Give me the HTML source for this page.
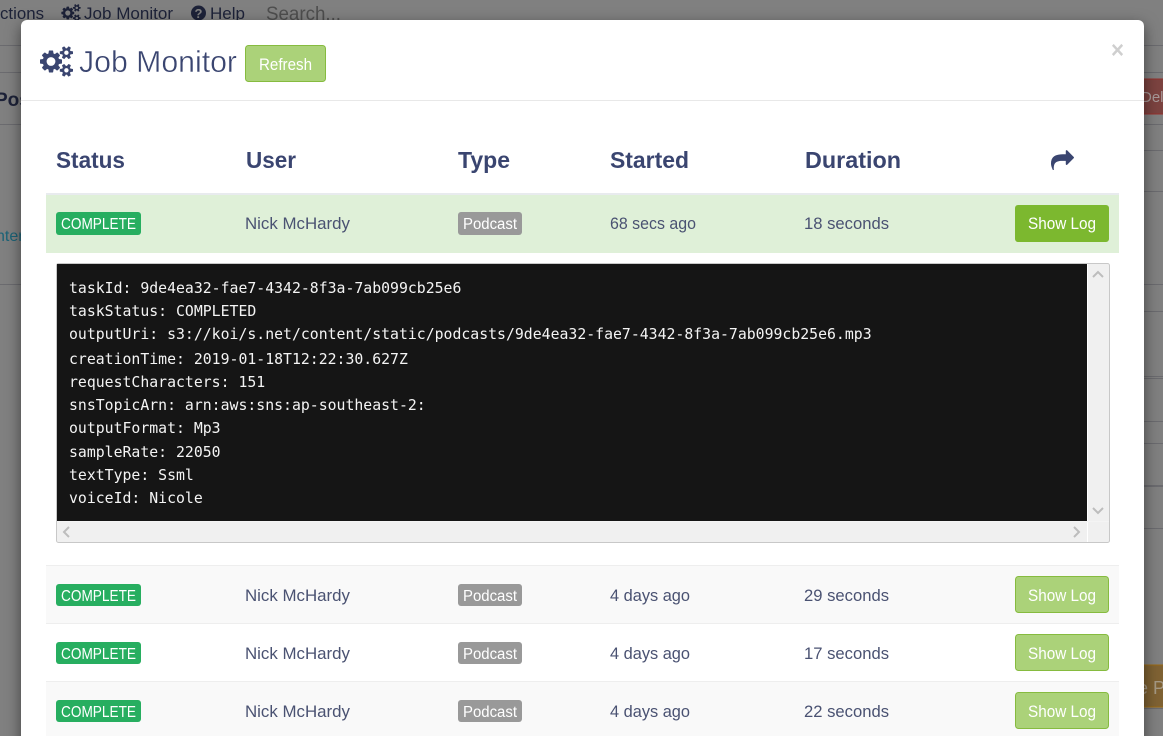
<!DOCTYPE html>
<html lang="en"><head><meta charset="utf-8"><title>Job Monitor</title>
<style>
html,body{margin:0;padding:0;width:1163px;height:736px;overflow:hidden;background:#808080}
#wrap{position:absolute;left:0;top:0;width:1163px;height:736px;overflow:hidden;background:#808080}
#bg,#fg{position:absolute;left:0;top:0;width:1163px;height:736px;display:block}
#modal{position:absolute;left:21px;top:20px;width:1123px;height:740px;background:#fff;border-radius:6px;box-shadow:0 5px 15px rgba(0,0,0,.5)}
text{font-family:"Liberation Sans",sans-serif}
.mono{font-family:"DejaVu Sans Mono",monospace;font-size:14.82px;fill:#f4f4f4}
.th{font-size:23.500px;font-weight:bold;fill:#3a4570}
.td{font-size:17px;fill:#4a5272}
.w{font-size:15.500px;fill:#fff}
.sl{font-size:16.500px;fill:#fff}
.nav{font-size:17px;fill:#1d2238}
</style></head><body>
<div id="wrap">
<svg id="bg" viewBox="0 0 1163 736" xmlns="http://www.w3.org/2000/svg">
<g fill="#6b6b6f">
<rect x="0" y="45" width="1163" height="1"/><rect x="0" y="72" width="1163" height="1"/>
<rect x="0" y="124" width="1163" height="1"/><rect x="1144" y="150" width="19" height="1"/>
<rect x="1144" y="191" width="19" height="1"/><rect x="0" y="284" width="1163" height="1"/>
<rect x="1144" y="311" width="19" height="1"/><rect x="1144" y="376" width="19" height="1"/>
<rect x="1144" y="378" width="19" height="1"/><rect x="1144" y="421" width="19" height="1"/>
<rect x="1144" y="443" width="19" height="1"/><rect x="1144" y="485" width="19" height="2"/>
<rect x="1144" y="528" width="19" height="1"/><rect x="1144" y="708" width="19" height="1"/>
</g>
<text class="nav" x="0" y="19" textLength="44" lengthAdjust="spacingAndGlyphs">ctions</text>
<svg x="61" y="4" width="20" height="18" viewBox="0 0 1920 1792"><path fill="#1d2238" d="M896 896q0-106-75-181t-181-75-181 75-75 181 75 181 181 75 181-75 75-181zm768 512q0-52-38-90t-90-38-90 38-38 90q0 53 37.5 90.5t90.5 37.5 90.5-37.5 37.5-90.5zm0-1024q0-52-38-90t-90-38-90 38-38 90q0 53 37.5 90.5t90.5 37.5 90.5-37.5 37.5-90.5zm-384 421v185q0 10-7 19.5t-16 10.5l-155 24q-11 35-32 76 34 48 90 115 7 11 7 20 0 12-7 19-23 30-82.5 89.5t-78.5 59.5q-11 0-21-7l-115-90q-37 19-77 31-11 108-23 155-7 24-30 24h-186q-11 0-20-7.5t-10-17.5l-23-153q-34-10-75-31l-118 89q-7 7-20 7-11 0-21-8-144-133-144-160 0-9 7-19 10-14 41-53t47-61q-23-44-35-82l-152-24q-10-1-17-9.5t-7-19.5v-185q0-10 7-19.5t16-10.5l155-24q11-35 32-76-34-48-90-115-7-11-7-20 0-12 7-20 22-30 82-89t79-59q11 0 21 7l115 90q34-18 77-32 11-108 23-154 7-24 30-24h186q11 0 20 7.5t10 17.5l23 153q34 10 75 31l118-89q8-7 20-7 11 0 21 8 144 133 144 160 0 8-7 19-12 16-42 54t-45 60q23 48 34 82l152 23q10 2 17 10.5t7 19.5zm640 533v140q0 16-149 31-12 27-30 52 51 113 51 138 0 4-4 7-122 71-124 71-8 0-46-47t-52-68q-20 2-30 2t-30-2q-14 21-52 68t-46 47q-2 0-124-71-4-3-4-7 0-25 51-138-18-25-30-52-149-15-149-31v-140q0-16 149-31 13-29 30-52-51-113-51-138 0-4 4-7 4-2 35-20t59-34 30-16q8 0 46 46.5t52 67.5q20-2 30-2t30 2q51-71 92-112l6-2q4 0 124 70 4 3 4 7 0 25-51 138 17 23 30 52 149 15 149 31zm0-1024v140q0 16-149 31-12 27-30 52 51 113 51 138 0 4-4 7-122 71-124 71-8 0-46-47t-52-68q-20 2-30 2t-30-2q-14 21-52 68t-46 47q-2 0-124-71-4-3-4-7 0-25 51-138-18-25-30-52-149-15-149-31v-140q0-16 149-31 13-29 30-52-51-113-51-138 0-4 4-7 4-2 35-20t59-34 30-16q8 0 46 46.5t52 67.5q20-2 30-2t30 2q51-71 92-112l6-2q4 0 124 70 4 3 4 7 0 25-51 138 17 23 30 52 149 15 149 31z"/></svg>
<text class="nav" x="84" y="19" textLength="89" lengthAdjust="spacingAndGlyphs">Job Monitor</text>
<circle cx="198.500" cy="13" r="7.500" fill="#1d2238"/>
<text x="198.500" y="18" text-anchor="middle" font-size="13" font-weight="bold" fill="#808080">?</text>
<text class="nav" x="210" y="19" textLength="35" lengthAdjust="spacingAndGlyphs">Help</text>
<text x="266" y="20" font-size="19" fill="#4e4e4e" textLength="75" lengthAdjust="spacingAndGlyphs">Search...</text>
<text x="-5" y="106" font-size="19" font-weight="bold" fill="#1d2238">Pos</text>
<text x="-4" y="241" font-size="16" fill="#1b6377">nter</text>
<rect x="1130" y="79" width="40" height="35" fill="#7c4340" stroke="#96302c"/>
<text x="1141" y="102" font-size="15" fill="#a89a99">Dele</text>
<rect x="1130" y="665" width="40" height="42" fill="#7f6233" stroke="#9c6a12"/>
<text x="1138" y="694" font-size="18" fill="#a69a85">e P</text>
</svg>
<div id="modal"></div>
<svg id="fg" viewBox="0 0 1163 736" xmlns="http://www.w3.org/2000/svg">
<rect x="21" y="100" width="1123" height="1" fill="#e8e8e8"/>
<svg x="40" y="46" width="33" height="31" viewBox="0 0 1920 1792"><path fill="#3a4570" d="M896 896q0-106-75-181t-181-75-181 75-75 181 75 181 181 75 181-75 75-181zm768 512q0-52-38-90t-90-38-90 38-38 90q0 53 37.5 90.5t90.5 37.5 90.5-37.5 37.5-90.5zm0-1024q0-52-38-90t-90-38-90 38-38 90q0 53 37.5 90.5t90.5 37.5 90.5-37.5 37.5-90.5zm-384 421v185q0 10-7 19.5t-16 10.5l-155 24q-11 35-32 76 34 48 90 115 7 11 7 20 0 12-7 19-23 30-82.5 89.5t-78.5 59.5q-11 0-21-7l-115-90q-37 19-77 31-11 108-23 155-7 24-30 24h-186q-11 0-20-7.5t-10-17.5l-23-153q-34-10-75-31l-118 89q-7 7-20 7-11 0-21-8-144-133-144-160 0-9 7-19 10-14 41-53t47-61q-23-44-35-82l-152-24q-10-1-17-9.5t-7-19.5v-185q0-10 7-19.5t16-10.5l155-24q11-35 32-76-34-48-90-115-7-11-7-20 0-12 7-20 22-30 82-89t79-59q11 0 21 7l115 90q34-18 77-32 11-108 23-154 7-24 30-24h186q11 0 20 7.5t10 17.5l23 153q34 10 75 31l118-89q8-7 20-7 11 0 21 8 144 133 144 160 0 8-7 19-12 16-42 54t-45 60q23 48 34 82l152 23q10 2 17 10.5t7 19.5zm640 533v140q0 16-149 31-12 27-30 52 51 113 51 138 0 4-4 7-122 71-124 71-8 0-46-47t-52-68q-20 2-30 2t-30-2q-14 21-52 68t-46 47q-2 0-124-71-4-3-4-7 0-25 51-138-18-25-30-52-149-15-149-31v-140q0-16 149-31 13-29 30-52-51-113-51-138 0-4 4-7 4-2 35-20t59-34 30-16q8 0 46 46.5t52 67.5q20-2 30-2t30 2q51-71 92-112l6-2q4 0 124 70 4 3 4 7 0 25-51 138 17 23 30 52 149 15 149 31zm0-1024v140q0 16-149 31-12 27-30 52 51 113 51 138 0 4-4 7-122 71-124 71-8 0-46-47t-52-68q-20 2-30 2t-30-2q-14 21-52 68t-46 47q-2 0-124-71-4-3-4-7 0-25 51-138-18-25-30-52-149-15-149-31v-140q0-16 149-31 13-29 30-52-51-113-51-138 0-4 4-7 4-2 35-20t59-34 30-16q8 0 46 46.5t52 67.5q20-2 30-2t30 2q51-71 92-112l6-2q4 0 124 70 4 3 4 7 0 25-51 138 17 23 30 52 149 15 149 31z"/></svg>
<text x="79" y="72" font-size="31" fill="#3a4570" stroke="#fff" stroke-width=".45" textLength="158" lengthAdjust="spacingAndGlyphs">Job Monitor</text>
<rect x="245.500" y="45.500" width="80" height="36" rx="3" fill="#abd279" stroke="#86bb3f"/>
<text class="sl" x="259" y="70" textLength="53" lengthAdjust="spacingAndGlyphs">Refresh</text>
<text x="1111" y="58" font-size="24" font-weight="bold" fill="#cfcfcf" textLength="13" lengthAdjust="spacingAndGlyphs">×</text>
<text class="th" x="56" y="168" textLength="69" lengthAdjust="spacingAndGlyphs">Status</text>
<text class="th" x="246" y="168" textLength="50" lengthAdjust="spacingAndGlyphs">User</text>
<text class="th" x="458" y="168" textLength="52" lengthAdjust="spacingAndGlyphs">Type</text>
<text class="th" x="610" y="168" textLength="79" lengthAdjust="spacingAndGlyphs">Started</text>
<text class="th" x="805" y="168" textLength="96" lengthAdjust="spacingAndGlyphs">Duration</text>
<svg x="1051" y="149" width="23" height="21" viewBox="0 -1216 1792 1456"><path fill="#3a4570" transform="scale(1,-1)" d="M1792 640q0 26-19 45l-512 512q-19 19-45 19t-45-19-19-45v-256h-224q-713 0-875-403-53-134-53-333 0-166 127-451 3-7 10.500-24t13.500-30 13-22q12-17 28-17 15 0 23.500 10t8.500 25q0 9-2.500 26.500t-2.500 23.500q-5 68-5 123 0 101 17.500 181t48.500 138.500 80 101 105.500 69.500 133 42.500 154 21.500 175.500 6h224v-256q0-26 19-45t45-19 45 19l512 512q19 19 19 45z"/></svg>

<rect x="46" y="193" width="1073" height="60" fill="#dff0d8"/>
<rect x="46" y="193" width="1073" height="2" fill="#e8ebee"/>
<rect x="56" y="212" width="85" height="23" rx="3" fill="#27ae60"/>
<text class="w" x="61" y="229" textLength="75" lengthAdjust="spacingAndGlyphs">COMPLETE</text>
<text class="td" x="245" y="229" textLength="105" lengthAdjust="spacingAndGlyphs">Nick McHardy</text>
<rect x="458" y="212" width="64" height="23" rx="3" fill="#999"/>
<text class="w" x="463" y="229" textLength="54" lengthAdjust="spacingAndGlyphs">Podcast</text>
<text class="td" x="610" y="229" textLength="86" lengthAdjust="spacingAndGlyphs">68 secs ago</text>
<text class="td" x="804" y="229" textLength="85" lengthAdjust="spacingAndGlyphs">18 seconds</text>
<rect x="1015" y="205" width="94" height="37" rx="3" fill="#7cb82f"/>
<text class="sl" x="1028" y="229" textLength="68" lengthAdjust="spacingAndGlyphs">Show Log</text>

<rect x="56.500" y="263.500" width="1053" height="279" rx="2" fill="#f0f0f0" stroke="#c8c8c8"/>
<rect x="57" y="264" width="1030" height="257" fill="#151515"/>
<rect x="1087" y="264" width="1" height="278" fill="#fff"/>
<rect x="57" y="521" width="1052" height="1" fill="#f4f4f4"/>
<g fill="none" stroke="#bdbdbd" stroke-width="2">
<path d="M1093 277l5-5 5 5"/><path d="M1093 508l5 5 5-5"/>
<path d="M69 527l-5 5 5 5"/><path d="M1074 527l5 5-5 5"/>
</g>
<text class="mono" x="69" y="293">taskId: 9de4ea32-fae7-4342-8f3a-7ab099cb25e6</text>
<text class="mono" x="69" y="316">taskStatus: COMPLETED</text>
<text class="mono" x="69" y="339">outputUri: s3://koi/s.net/content/static/podcasts/9de4ea32-fae7-4342-8f3a-7ab099cb25e6.mp3</text>
<text class="mono" x="69" y="364">creationTime: 2019-01-18T12:22:30.627Z</text>
<text class="mono" x="69" y="387">requestCharacters: 151</text>
<text class="mono" x="69" y="410">snsTopicArn: arn:aws:sns:ap-southeast-2:</text>
<text class="mono" x="69" y="433">outputFormat: Mp3</text>
<text class="mono" x="69" y="457">sampleRate: 22050</text>
<text class="mono" x="69" y="480">textType: Ssml</text>
<text class="mono" x="69" y="503">voiceId: Nicole</text>

<rect x="46" y="565" width="1073" height="58" fill="#f9f9f9"/>
<rect x="46" y="682" width="1073" height="54" fill="#f9f9f9"/>
<rect x="46" y="565" width="1073" height="1" fill="#eee"/>
<rect x="46" y="623" width="1073" height="1" fill="#eee"/>
<rect x="46" y="681" width="1073" height="1" fill="#eee"/>

<g>
<rect x="56" y="584" width="85" height="22" rx="3" fill="#27ae60"/>
<text class="w" x="61" y="601" textLength="75" lengthAdjust="spacingAndGlyphs">COMPLETE</text>
<text class="td" x="245" y="601" textLength="105" lengthAdjust="spacingAndGlyphs">Nick McHardy</text>
<rect x="458" y="584" width="64" height="22" rx="3" fill="#999"/>
<text class="w" x="463" y="601" textLength="54" lengthAdjust="spacingAndGlyphs">Podcast</text>
<text class="td" x="610" y="601" textLength="80" lengthAdjust="spacingAndGlyphs">4 days ago</text>
<text class="td" x="804" y="601" textLength="85" lengthAdjust="spacingAndGlyphs">29 seconds</text>
<rect x="1015.500" y="576.500" width="93" height="36" rx="3" fill="#abd279" stroke="#86bb3f"/>
<text class="sl" x="1028" y="601" textLength="68" lengthAdjust="spacingAndGlyphs">Show Log</text>
</g>
<g>
<rect x="56" y="642" width="85" height="22" rx="3" fill="#27ae60"/>
<text class="w" x="61" y="659" textLength="75" lengthAdjust="spacingAndGlyphs">COMPLETE</text>
<text class="td" x="245" y="659" textLength="105" lengthAdjust="spacingAndGlyphs">Nick McHardy</text>
<rect x="458" y="642" width="64" height="22" rx="3" fill="#999"/>
<text class="w" x="463" y="659" textLength="54" lengthAdjust="spacingAndGlyphs">Podcast</text>
<text class="td" x="610" y="659" textLength="80" lengthAdjust="spacingAndGlyphs">4 days ago</text>
<text class="td" x="804" y="659" textLength="85" lengthAdjust="spacingAndGlyphs">17 seconds</text>
<rect x="1015.500" y="634.500" width="93" height="36" rx="3" fill="#abd279" stroke="#86bb3f"/>
<text class="sl" x="1028" y="659" textLength="68" lengthAdjust="spacingAndGlyphs">Show Log</text>
</g>
<g>
<rect x="56" y="700" width="85" height="22" rx="3" fill="#27ae60"/>
<text class="w" x="61" y="717" textLength="75" lengthAdjust="spacingAndGlyphs">COMPLETE</text>
<text class="td" x="245" y="717" textLength="105" lengthAdjust="spacingAndGlyphs">Nick McHardy</text>
<rect x="458" y="700" width="64" height="22" rx="3" fill="#999"/>
<text class="w" x="463" y="717" textLength="54" lengthAdjust="spacingAndGlyphs">Podcast</text>
<text class="td" x="610" y="717" textLength="80" lengthAdjust="spacingAndGlyphs">4 days ago</text>
<text class="td" x="804" y="717" textLength="85" lengthAdjust="spacingAndGlyphs">22 seconds</text>
<rect x="1015.500" y="692.500" width="93" height="36" rx="3" fill="#abd279" stroke="#86bb3f"/>
<text class="sl" x="1028" y="717" textLength="68" lengthAdjust="spacingAndGlyphs">Show Log</text>
</g>
</svg>
</div>
</body></html>
